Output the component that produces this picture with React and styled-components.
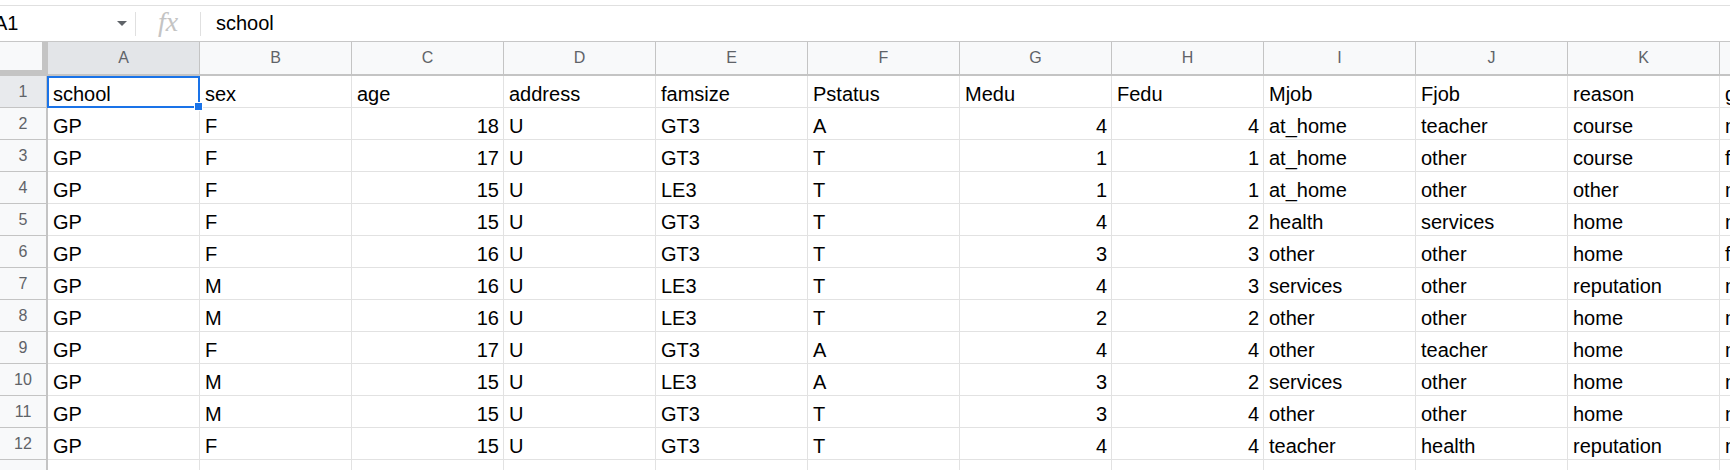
import React from 'react';
import styled, { createGlobalStyle } from 'styled-components';

const GlobalStyle = createGlobalStyle`
  body {
    margin: 0;
    background: #fff;
    overflow: hidden;
  }
`;

const COLUMNS = ['A', 'B', 'C', 'D', 'E', 'F', 'G', 'H', 'I', 'J', 'K', 'L'];

const HEADER = ['school', 'sex', 'age', 'address', 'famsize', 'Pstatus', 'Medu', 'Fedu', 'Mjob', 'Fjob', 'reason', 'guardian'];

const ROWS = [
  ['GP', 'F', 18, 'U', 'GT3', 'A', 4, 4, 'at_home', 'teacher', 'course', 'mother'],
  ['GP', 'F', 17, 'U', 'GT3', 'T', 1, 1, 'at_home', 'other', 'course', 'father'],
  ['GP', 'F', 15, 'U', 'LE3', 'T', 1, 1, 'at_home', 'other', 'other', 'mother'],
  ['GP', 'F', 15, 'U', 'GT3', 'T', 4, 2, 'health', 'services', 'home', 'mother'],
  ['GP', 'F', 16, 'U', 'GT3', 'T', 3, 3, 'other', 'other', 'home', 'father'],
  ['GP', 'M', 16, 'U', 'LE3', 'T', 4, 3, 'services', 'other', 'reputation', 'mother'],
  ['GP', 'M', 16, 'U', 'LE3', 'T', 2, 2, 'other', 'other', 'home', 'mother'],
  ['GP', 'F', 17, 'U', 'GT3', 'A', 4, 4, 'other', 'teacher', 'home', 'mother'],
  ['GP', 'M', 15, 'U', 'LE3', 'A', 3, 2, 'services', 'other', 'home', 'mother'],
  ['GP', 'M', 15, 'U', 'GT3', 'T', 3, 4, 'other', 'other', 'home', 'mother'],
  ['GP', 'F', 15, 'U', 'GT3', 'T', 4, 4, 'teacher', 'health', 'reputation', 'mother'],
];

const Page = styled.div`
  width: 1730px;
  height: 470px;
  overflow: hidden;
  font-family: 'Liberation Sans', Arial, sans-serif;
  color: #000;
`;

const TopStrip = styled.div`
  height: 5px;
  border-bottom: 1px solid #e0e0e0;
`;

const FormulaBar = styled.div`
  display: flex;
  align-items: center;
  height: 35px;
  border-bottom: 1px solid #c7c7c7;
`;

const NameBox = styled.div`
  display: flex;
  align-items: center;
  justify-content: space-between;
  width: 141px;
  margin-left: -6px;
  padding-right: 8px;
  box-sizing: border-box;
  font-size: 20px;
`;

const Caret = styled.span`
  width: 0;
  height: 0;
  border-left: 5px solid transparent;
  border-right: 5px solid transparent;
  border-top: 5px solid #5f6368;
`;

const Divider = styled.span`
  width: 1px;
  height: 24px;
  background: #e0e0e0;
`;

const FxMark = styled.span`
  width: 64px;
  text-align: center;
  font-family: 'Liberation Serif', 'Times New Roman', serif;
  font-style: italic;
  font-size: 28px;
  color: #c4c4c4;
  margin-top: -3px;
`;

const FormulaText = styled.span`
  margin-left: 15px;
  font-size: 20px;
`;

const Grid = styled.div`
  display: grid;
  grid-template-columns: 48px repeat(${COLUMNS.length}, 152px);
  grid-template-rows: 34px;
  grid-auto-rows: 32px;
`;

const Corner = styled.div`
  background: #f8f9fa;
  border-right: 6px solid #c4c4c4;
  border-bottom: 6px solid #c4c4c4;
`;

const ColHead = styled.div`
  display: flex;
  align-items: center;
  justify-content: center;
  background: ${p => (p.$active ? '#e3e5e8' : '#f8f9fa')};
  border-right: 1px solid #c4c4c4;
  border-bottom: 2px solid #c4c4c4;
  font-size: 16px;
  color: #5f6368;
`;

const RowHead = styled.div`
  display: flex;
  align-items: center;
  justify-content: center;
  background: ${p => (p.$active ? '#e8eaed' : '#f8f9fa')};
  border-right: 2px solid #c4c4c4;
  border-bottom: 1px solid #c4c4c4;
  font-size: 16px;
  color: #5f6368;
`;

const Cell = styled.div`
  position: relative;
  display: flex;
  align-items: flex-end;
  justify-content: ${p => (p.$numeric ? 'flex-end' : 'flex-start')};
  padding: 0 4px 1px 5px;
  border-right: 1px solid #e2e2e2;
  border-bottom: 1px solid #e2e2e2;
  font-size: 20px;
  line-height: 23px;
  white-space: nowrap;
  overflow: hidden;
`;

const ActiveCell = styled(Cell)`
  overflow: visible;
  z-index: 1;
  &::before {
    content: '';
    position: absolute;
    inset: 0 -1px -1px -1px;
    border: 2px solid #1a73e8;
    pointer-events: none;
  }
  &::after {
    content: '';
    position: absolute;
    right: -4px;
    bottom: -4px;
    width: 7px;
    height: 7px;
    background: #1a73e8;
    border: 1px solid #fff;
  }
`;

const renderCell = (value, key) => (
  <Cell key={key} $numeric={typeof value === 'number'}>
    {value}
  </Cell>
);

const App = () => (
  <Page>
    <GlobalStyle />
    <TopStrip />
    <FormulaBar>
      <NameBox>
        <span>A1</span>
        <Caret />
      </NameBox>
      <Divider />
      <FxMark>fx</FxMark>
      <Divider />
      <FormulaText>school</FormulaText>
    </FormulaBar>
    <Grid>
      <Corner />
      {COLUMNS.map((c, i) => (
        <ColHead key={c} $active={i === 0}>{c}</ColHead>
      ))}

      <RowHead $active>1</RowHead>
      {HEADER.map((h, i) =>
        i === 0 ? <ActiveCell key={h}>{h}</ActiveCell> : renderCell(h, h)
      )}

      {ROWS.map((row, r) => (
        <React.Fragment key={r}>
          <RowHead>{r + 2}</RowHead>
          {row.map((v, c) => renderCell(v, `${r}-${c}`))}
        </React.Fragment>
      ))}

      {/* next row, only its top edge shows */}
      <RowHead />
      {COLUMNS.map(c => <Cell key={`x-${c}`} />)}
    </Grid>
  </Page>
);

export default App;
